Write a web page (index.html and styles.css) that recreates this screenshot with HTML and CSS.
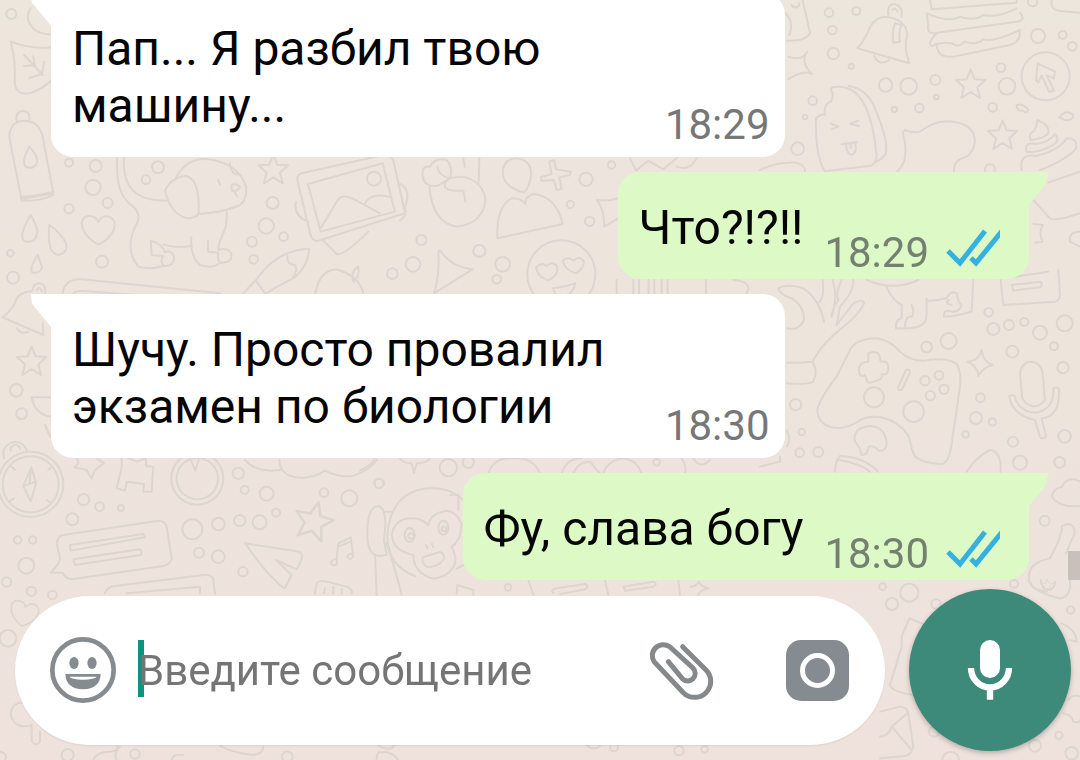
FILE: index.html
```html
<!DOCTYPE html>
<html lang="ru">

<head>
    <title>Чат</title>
    <meta charset="UTF-8">
    <meta name="viewport" content="width=device-width, initial-scale=1">
    <link rel="stylesheet" href="styles.css">
</head>

<body>
    <!-- Wallpaper -->
    <svg class="wallpaper" viewBox="0 0 1080 760" preserveAspectRatio="xMidYMin slice" aria-hidden="true">
        <defs>
            <path id="star" d="M0-44L12-14L44-12L20 10L28 42L0 24L-28 42L-20 10L-44-12L-12-14Z" />
            <path id="heart" d="M0 44C-60 10-62-42-26-42Q-6-42 0-24Q10-46 32-40C64-28 50 20 0 44Z" />
        </defs>

        <!-- top left -->
        <g transform="scale(.3333)">
            <circle cx="34" cy="42" r="15" />
            <path d="M92 25Q70 60 105 90Q125 103 155 103" />
            <path d="M32 125Q90 148 155 142M32 125Q48 180 44 250Q50 290 95 278Q135 262 155 240M72 165L128 225M100 168L104 196M72 198L104 196M132 185L126 222M88 234L126 222" />
            <path d="M50 362Q45 335 70 332Q92 335 88 360M64 598L28 410Q30 362 75 362Q118 365 128 410L160 580ZM64 602Q120 606 160 585L158 576Q100 590 62 590" />
            <path d="M88 440Q60 490 80 502Q105 508 112 485Q112 465 88 440Z" />
            <circle cx="207" cy="488" r="12" /><circle cx="287" cy="498" r="18" /><circle cx="279" cy="562" r="23" />
            <circle cx="323" cy="609" r="15" /><circle cx="207" cy="626" r="14" /><circle cx="306" cy="785" r="18" />
            <circle cx="474" cy="502" r="18" /><circle cx="438" cy="539" r="13" />
            <path d="M92 645Q50 715 78 725Q108 730 112 695Q108 670 92 645ZM148 675Q140 760 175 765Q205 758 198 730Q185 700 148 675ZM113 765Q85 810 98 818Q125 820 126 800Z" />
            <circle cx="31" cy="760" r="10" /><circle cx="39" cy="833" r="18" />
            <use href="#heart" x="295" y="690" />
            <path d="M352 470Q345 570 385 608Q425 635 413 665C380 725 390 770 415 800Q450 810 490 798Q525 800 522 770Q515 748 495 757Q485 730 452 722L455 765L490 768Q478 785 492 798M490 734Q530 745 574 738M574 712Q570 770 600 795Q640 808 660 788Q698 790 694 762Q685 740 655 750C655 710 685 700 680 635M624 722L624 755L655 758Q650 775 660 788M372 470Q360 605 500 602" />
            <path d="M524 540Q560 470 625 478Q715 490 738 560Q742 600 720 615Q670 638 596 642Q600 540 560 528Q515 530 495 572Q510 640 560 655Q590 655 596 640" />
            <path d="M655 540L660 555M695 555Q710 548 720 562Q710 578 695 572ZM705 578L712 590M690 490Q690 520 712 524" />
            <use href="#star" x="820" y="508" />
            <circle cx="818" cy="609" r="18" /><circle cx="799" cy="678" r="23" /><circle cx="851" cy="710" r="13" />
            <circle cx="756" cy="725" r="15" /><circle cx="761" cy="778" r="13" /><circle cx="1177" cy="821" r="16" />
            <path d="M892 540Q890 525 905 520L1150 465Q1170 465 1180 480L1215 640L950 724Q935 720 932 705ZM924 552L1148 490L1185 635L962 695ZM962 685L1015 598Q1030 580 1070 602L1140 640M1095 610Q1115 575 1175 592M888 605Q880 650 925 665M970 722L1010 762Q1030 770 1105 695" />
            <circle cx="1122" cy="536" r="21" />
            <path d="M730 880L770 838Q830 750 928 746Q920 820 860 845Q830 860 800 880M862 768Q860 795 885 795Q895 812 880 830M770 845L795 880M946 880Q960 810 1010 808Q1080 830 1090 880M1060 845Q1050 815 1075 800Q1080 825 1062 845" />
            <path d="M188 880Q195 835 245 838L660 880M220 880Q230 870 260 874L400 884" />
        </g>

        <!-- middle top -->
        <g transform="translate(400 0) scale(.3333)">
            <path d="M0 552Q35 570 15 620Q22 650 0 662M70 540Q60 495 90 500Q105 470 140 480Q160 500 150 535Q125 550 112 558Q70 560 70 530M112 500Q118 530 150 535M88 560Q98 670 170 680Q250 670 256 600Q250 545 190 530Q130 530 135 560Q140 575 190 572L196 605M238 475L236 550M190 475L194 500" />
            <path d="M308 520Q310 475 350 475Q395 480 393 525Q390 560 372 578Q310 560 308 520ZM292 715Q288 620 335 595Q365 595 376 612Q375 590 400 582Q470 590 488 672Z" />
            <path d="M462 480L468 508L512 515L510 525L478 532L485 568L470 570L462 540L425 542L422 532L455 522L448 485Z" />
            <circle cx="635" cy="495" r="11" /><circle cx="558" cy="538" r="20" /><circle cx="511" cy="613" r="11" />
            <circle cx="569" cy="664" r="14" /><circle cx="64" cy="720" r="15" /><circle cx="238" cy="753" r="18" />
            <circle cx="39" cy="793" r="22" /><circle cx="308" cy="793" r="22" /><circle cx="290" cy="838" r="13" />
            <path d="M120 750Q150 800 218 808L102 880Q120 820 115 755ZM590 600Q620 605 655 595M590 600Q615 630 612 680L655 655" />
            <circle cx="484" cy="823" r="102" />
            <path d="M408 802Q425 785 440 798Q460 780 472 800Q475 830 445 840Q415 835 408 802ZM488 782Q505 768 520 782Q540 765 552 785Q550 808 528 820Q495 812 488 782ZM458 865Q500 860 526 850Q520 880 500 885M458 865L468 885" />
            <path d="M690 475L708 512L745 482L790 508L830 475M830 500Q870 515 890 475M650 840L650 880M700 840L700 880M717 840V880M746 840V880M763 840V880M785 840V880M803 840V880M918 840V880M1000 840Q1060 845 1040 880" />
        </g>

        <!-- top right -->
        <g transform="translate(760 0) scale(.3333)">
            <path d="M128 0L150 98Q140 125 80 122M70 35Q105 60 88 105M95 15A12 12 0 0 0 118 10" />
            <path d="M142 155Q120 185 155 222Q130 208 85 238M142 155Q125 185 85 170" />
            <circle cx="207" cy="38" r="13" /><circle cx="289" cy="33" r="12" /><circle cx="217" cy="90" r="13" />
            <circle cx="220" cy="161" r="17" /><circle cx="274" cy="199" r="8" /><circle cx="158" cy="302" r="13" />
            <circle cx="113" cy="446" r="19" /><circle cx="135" cy="351" r="7" />
            <path d="M292 145C330 110 320 60 372 50Q440 55 442 105Q430 140 448 190ZM342 168Q355 200 388 180M385 45Q380 12 405 12Q430 20 425 50M398 30Q406 20 412 34M405 70Q395 95 400 128L420 125Q415 95 425 75Z" />
            <path d="M510 0L515 28Q560 25 640 18L770 8V0M500 40Q570 70 600 50Q640 65 670 45Q710 55 770 25M505 75Q500 100 520 100L770 65Q800 60 780 38M505 75L500 40M530 100Q500 130 515 138Q550 125 575 130Q595 145 615 125Q650 138 670 118Q700 128 780 90M530 130Q530 175 580 170L750 135Q785 125 778 90" />
            <circle cx="818" cy="5" r="14" /><circle cx="834" cy="108" r="21" /><circle cx="908" cy="105" r="12" /><circle cx="937" cy="139" r="13" />
            <path d="M875 0Q870 30 900 33L960 38" />
            <circle cx="857" cy="229" r="72" />
            <path d="M833 190L885 215L882 235L860 226L882 272L868 276L845 226L835 248L828 240Z" />
            <circle cx="377" cy="255" r="20" /><circle cx="446" cy="259" r="25" /><circle cx="526" cy="240" r="15" />
            <circle cx="529" cy="291" r="7" /><circle cx="478" cy="324" r="13" /><circle cx="403" cy="328" r="8" />
            <circle cx="723" cy="203" r="13" /><circle cx="741" cy="259" r="25" /><circle cx="698" cy="322" r="13" />
            <use href="#star" x="632" y="252" /><use href="#star" x="728" y="405" />
            <path d="M770 315Q790 308 805 330Q800 342 788 332Q770 335 770 315ZM898 352Q920 325 940 345Q940 362 915 360Z" />
            <path d="M218 262Q330 240 350 470Q345 500 325 498L195 514Q165 470 168 355Q185 340 195 345Q190 310 212 305Q225 285 212 268ZM265 258Q320 265 345 325Q385 420 378 460Q370 475 350 485M212 370L235 380L215 388M295 362L270 372L298 378M245 432L290 427M258 432Q260 465 278 464Q292 455 286 428M272 430L272 445" />
            <path d="M412 514Q435 490 435 470Q440 440 428 398L435 390Q460 400 480 395Q520 365 560 364Q620 365 640 400Q655 440 620 470Q580 480 582 514" />
            <path d="M812 420Q805 400 820 395Q830 385 832 360Q870 375 865 400Q855 415 812 420ZM800 455Q790 425 830 432Q870 425 885 402Q905 425 870 440Q830 460 800 455ZM785 510Q775 460 830 468Q900 450 920 415Q955 415 948 445Q920 480 840 510" />
            <circle cx="690" cy="508" r="15" />
            <path d="M0 510Q50 485 110 488Q135 495 135 514M865 548Q900 535 960 515M820 600L870 655Q890 665 960 640M820 672L848 675Q835 700 848 725L825 728M960 695Q925 695 930 725L960 740" />
        </g>

        <!-- left, middle -->
        <g transform="translate(0 280) scale(.3333)">
            <path d="M8 112Q45 80 50 55Q65 35 95 34M8 112L130 165L128 130M50 145Q65 165 85 155M98 30Q100 8 120 10Q140 15 135 40M110 30Q118 18 126 34" />
            <use href="#star" x="95" y="243" />
            <circle cx="49" cy="331" r="19" /><circle cx="65" cy="401" r="16" />
            <path d="M155 352L95 352Q105 405 155 410M135 435L150 470" />
            <circle cx="92" cy="613" r="98" /><circle cx="92" cy="613" r="84" />
            <path d="M12 535A34 34 0 1 1 80 510M32 512A14 14 0 1 1 60 506M94 562L108 610L92 665L70 618ZM70 618L108 605M94 562L88 612M35 560L45 570M28 665L42 655M145 570L155 560M140 660L152 668" />
            <path d="M228 535Q245 550 222 562L260 570L275 596L285 570L312 550L290 536M365 535V562L350 625L375 632L380 605L432 612L430 635L455 635L460 560L438 558V535L412 545L385 535" />
            <circle cx="592" cy="596" r="78" /><circle cx="592" cy="596" r="62" />
            <path d="M572 538L586 572L596 538" />
            <circle cx="251" cy="659" r="17" /><circle cx="299" cy="680" r="13" /><circle cx="363" cy="684" r="9" /><circle cx="217" cy="718" r="18" />
            <circle cx="715" cy="580" r="17" /><circle cx="734" cy="630" r="12" /><circle cx="800" cy="641" r="21" /><circle cx="828" cy="698" r="12" />
            <circle cx="577" cy="748" r="30" /><circle cx="655" cy="732" r="19" /><circle cx="719" cy="722" r="17" /><circle cx="779" cy="727" r="21" />
            <circle cx="597" cy="818" r="15" /><circle cx="655" cy="830" r="19" /><circle cx="729" cy="875" r="14" />
            <circle cx="972" cy="638" r="13" /><circle cx="1048" cy="655" r="24" /><circle cx="1137" cy="610" r="14" />
            <circle cx="53" cy="780" r="11" /><circle cx="98" cy="780" r="11" /><circle cx="79" cy="857" r="24" /><circle cx="20" cy="906" r="14" />
            <circle cx="94" cy="934" r="14" /><circle cx="157" cy="945" r="13" />
            <path d="M735 540Q770 580 840 570M838 540Q840 590 900 593Q940 595 975 572Q1020 595 1060 587Q1110 570 1130 540" />
            <use href="#star" transform="translate(942 722) rotate(14) scale(1.3)" />
            <path d="M190 765L475 722Q495 722 500 740L515 835Q510 855 490 858L215 898Q195 895 188 878L152 878Q180 850 180 835L170 790Q175 765 190 765ZM210 795L430 762L435 772L212 812ZM220 838L420 808Q430 815 422 825L225 855Z" />
            <path d="M735 790L900 815Q915 830 890 868L828 840L875 885L855 925Q845 920 840 915Q790 870 735 790ZM1010 835L1015 790L1052 772L1060 830Q1050 845 1042 830Q1045 820 1058 822M1015 800L1052 785M1010 835Q1015 860 998 855Q985 845 1010 835Z" />
            <path d="M315 940Q320 920 345 918L610 885Q635 882 640 900L645 940M380 940L600 920V940M945 940L950 910Q960 900 980 905L1040 920Q1060 930 1055 940M975 925L972 940M1000 920V940M1025 928V940" />
        </g>

        <!-- monkey and what stands round it -->
        <g transform="translate(360 440) scale(.3333)">
            <circle cx="58" cy="130" r="14" /><circle cx="265" cy="83" r="26" /><circle cx="325" cy="67" r="17" />
            <path d="M0 92Q35 75 45 55M120 55Q130 70 155 70L162 98L170 70Q200 70 210 55M385 100Q400 50 460 55Q520 50 540 100M605 100Q620 55 665 55M640 100Q655 65 690 65L720 100M730 100Q745 60 790 55Q830 60 845 100M965 55Q980 75 975 100M1000 55Q1020 90 1050 60" />
            <circle cx="890" cy="67" r="10" />
            <path d="M310 180Q270 140 205 145Q90 155 82 290Q85 380 165 408M160 345Q90 330 97 275Q110 230 165 235Q190 240 205 255Q210 220 260 212Q290 215 304 250Q305 300 275 320Q290 350 285 370Q270 410 220 416Q160 400 160 345M188 352Q210 345 240 336Q258 345 250 360Q230 385 200 380Q185 370 188 352ZM198 315L202 325M216 312L220 322" />
            <ellipse cx="149" cy="285" rx="15" ry="21" /><ellipse cx="250" cy="263" rx="15" ry="21" />
            <circle cx="153" cy="288" r="8" /><circle cx="252" cy="267" r="7" />
            <path d="M75 345Q25 360 22 290Q20 200 55 198Q80 205 75 270L72 300L80 345M45 345L50 465M80 310Q110 400 125 465M75 215L95 215M270 165L295 165V210M290 385L310 375" />
            <circle cx="444" cy="442" r="10" />
            <path d="M290 460L292 435L340 450V465M505 420L520 465M580 460Q570 450 590 445L675 432Q690 440 675 448L600 462M735 420L745 465M790 440L880 425Q895 432 880 440L795 452ZM955 420L960 465M990 440Q1010 440 1015 425Q1025 440 1045 445Q1020 450 1015 465" />
            <path d="M55 915Q70 930 95 925Q110 915 105 905M50 960Q50 930 65 938Q90 930 115 960M680 915Q700 935 720 918" />
            <circle cx="762" cy="922" r="12" /><circle cx="957" cy="932" r="14" /><circle cx="1034" cy="928" r="10" />
        </g>

        <!-- gamepad, microphone -->
        <g transform="translate(760 270) scale(.3333)">
            <path d="M55 55Q80 40 130 55Q180 90 192 155M55 55Q60 75 95 85Q135 110 132 150Q115 185 80 175M188 30Q195 90 172 100M218 30Q235 80 215 140M245 30Q225 70 235 90Q215 120 215 140M280 30Q285 60 240 110L230 165M230 165L280 100Q310 85 312 100Q300 130 245 175Q190 215 157 275M80 278Q90 280 157 275Q175 300 160 335Q150 345 80 340" />
            <path d="M320 30Q400 65 475 30M380 50Q395 90 425 105V145Q405 150 408 175Q440 178 475 170Q500 165 500 130V85Q490 100 560 85Q570 60 590 70Q595 100 605 105Q600 125 575 125Q550 115 552 140Q580 140 635 125L640 30M455 105Q465 130 455 140Q435 135 435 175M568 90Q550 100 575 105" />
            <path d="M722 30L730 105L885 95Q900 90 900 75L895 0M755 45L842 35Q850 45 840 52L760 62ZM765 20L865 5" />
            <path d="M270 240Q290 205 350 205Q390 210 420 245Q450 272 490 272Q570 260 592 285Q605 310 600 350L578 500Q570 580 545 582Q490 580 465 560Q455 540 450 510Q440 475 390 450Q340 430 300 450Q260 480 215 472Q170 460 172 415Q190 370 230 320Z" />
            <path d="M325 250Q350 240 358 255L362 275Q385 270 385 295Q385 318 365 312Q368 330 350 332Q330 342 322 335L315 315Q295 325 297 295Q300 275 325 275ZM438 300Q450 295 450 308L425 360Q412 362 415 350Z" />
            <circle cx="342" cy="382" r="30" /><circle cx="461" cy="425" r="31" />
            <circle cx="495" cy="332" r="14" /><circle cx="537" cy="316" r="13" /><circle cx="552" cy="358" r="14" /><circle cx="511" cy="377" r="14" />
            <circle cx="500" cy="231" r="16" /><circle cx="566" cy="213" r="24" />
            <circle cx="686" cy="127" r="13" /><circle cx="700" cy="177" r="18" /><circle cx="747" cy="165" r="15" /><circle cx="793" cy="156" r="12" />
            <circle cx="840" cy="188" r="21" /><circle cx="914" cy="160" r="24" /><circle cx="882" cy="229" r="12" /><circle cx="757" cy="245" r="18" />
            <circle cx="909" cy="293" r="17" /><circle cx="661" cy="383" r="13" /><circle cx="648" cy="444" r="18" /><circle cx="697" cy="456" r="11" />
            <circle cx="617" cy="493" r="10" /><circle cx="759" cy="515" r="15" /><circle cx="914" cy="499" r="19" /><circle cx="780" cy="578" r="21" />
            <circle cx="899" cy="577" r="16" /><circle cx="107" cy="404" r="17" /><circle cx="125" cy="486" r="10" /><circle cx="119" cy="548" r="13" /><circle cx="175" cy="546" r="15" />
            <path d="M665 240Q668 275 698 285Q670 290 655 318Q655 290 622 275Q655 275 665 240Z" />
            <path d="M780 310Q785 275 815 275Q845 280 848 310L855 390Q840 412 815 408Q790 400 786 380ZM748 378Q765 370 768 390Q780 425 830 428Q885 415 880 355Q895 348 897 360Q900 440 845 445L858 500Q845 510 840 500L825 450Q755 435 748 378Z" />
            <path d="M285 515Q275 475 330 468Q375 470 380 520Q380 545 355 542Q345 525 325 530Q325 555 305 555Q300 530 285 515ZM225 605Q225 575 240 558Q310 560 355 605M238 570Q300 580 330 605M620 605Q650 560 690 540Q725 545 722 605M80 480Q95 510 80 530M0 590L60 575V560" />
            <path d="M875 680Q885 650 905 652Q915 625 945 628L960 635M875 680Q900 715 960 708" />
            <circle cx="854" cy="752" r="15" />
            <path d="M870 865Q910 790 905 770Q925 755 940 770Q950 790 935 810L918 850M870 865Q800 880 808 930Q815 960 860 965M930 870Q940 900 930 940" />
            <use href="#star" transform="translate(862 945) scale(.4)" />
        </g>

        <!-- below and beside the message box -->
        <g transform="translate(0 580) scale(.3333)">
            <use href="#heart" transform="translate(72 102) rotate(12) scale(.85)" />
            <circle cx="24" cy="175" r="25" />
            <path d="M95 435Q45 450 32 405Q35 360 80 370M95 440V485Q110 500 120 485V455M0 515Q25 520 15 540M280 540Q290 515 330 515Q360 510 350 498M350 540Q340 520 360 500M660 498Q700 520 760 525Q790 520 790 500M515 540Q520 520 550 525" />
            <circle cx="203" cy="525" r="18" /><circle cx="405" cy="522" r="14" /><circle cx="862" cy="530" r="16" />
        </g>
        <g transform="translate(880 580) scale(.3333)">
            <circle cx="88" cy="38" r="27" /><circle cx="36" cy="72" r="18" /><circle cx="8" cy="20" r="10" /><circle cx="168" cy="72" r="14" /><circle cx="402" cy="12" r="12" />
            <path d="M445 0Q455 35 540 55Q575 50 570 0M482 0Q485 28 505 30Q525 28 525 5" />
            <circle cx="572" cy="90" r="11" /><circle cx="537" cy="466" r="11" /><circle cx="575" cy="520" r="19" />
            <path d="M88 115L150 140M88 115L65 170V200L30 315Q35 335 100 345M0 395L60 380Q80 380 85 400L100 500Q95 525 75 528L0 535M0 470Q25 470 35 440L82 400M35 440L95 510M545 130Q590 150 590 185L570 180M565 360Q580 340 600 350M550 400Q575 405 580 425Q600 430 600 420" />
            <circle cx="465" cy="497" r="18" /><circle cx="212" cy="540" r="25" /><circle cx="162" cy="455" r="15" />
        </g>
    </svg>

    <div class="chat">
        <main class="messages">
            <div class="bubble in">
                <p class="text">Пап... Я разбил твою машину...</p>
                <time class="time">18:29</time>
            </div>
            <div class="bubble out">
                <p class="text">Что?!?!!</p>
                <time class="time">18:29</time>
                <svg class="ticks" viewBox="0 0 54 38" role="img" aria-label="Прочитано">
                    <path d="M2 22L14 34L39 2M25 29L30 34L56 2" />
                </svg>
            </div>
            <div class="bubble in">
                <p class="text">Шучу. Просто провалил экзамен по биологии</p>
                <time class="time">18:30</time>
            </div>
            <div class="bubble out">
                <p class="text">Фу, слава богу</p>
                <time class="time">18:30</time>
                <svg class="ticks" viewBox="0 0 54 38" role="img" aria-label="Прочитано">
                    <path d="M2 22L14 34L39 2M25 29L30 34L56 2" />
                </svg>
            </div>
            <div class="scroll-thumb"></div>
        </main>

        <form class="composer">
            <div class="entry">
                <button class="icon-btn" type="button" aria-label="Эмодзи">
                    <svg width="66" height="66" viewBox="0 0 198 198">
                        <circle cx="99" cy="99" r="92" fill="none" stroke="#868b8f" stroke-width="14" />
                        <ellipse cx="72" cy="78" rx="14" ry="18" fill="#868b8f" />
                        <ellipse cx="126" cy="78" rx="14" ry="18" fill="#868b8f" />
                        <path d="M46 111H152Q150 156 99 157Q48 156 46 111Z" fill="#868b8f" />
                        <path d="M58 119H140Q134 127 99 128Q64 127 58 119Z" fill="#fff" />
                    </svg>
                </button>
                <div class="field">
                    <input class="message" type="text" name="message" placeholder="Введите сообщение" aria-label="Введите сообщение">
                </div>
                <button class="icon-btn" type="button" aria-label="Прикрепить">
                    <svg width="66" height="60" viewBox="88 60 198 180">
                        <path d="M192 80L262 150A48 48 0 0 1 194 218L107 126A33 33 0 0 1 153 80L223 144A22 22 0 0 1 191 176L149 125" fill="none" stroke="#85898b" stroke-width="15" stroke-linecap="round" />
                    </svg>
                </button>
                <button class="icon-btn camera" type="button" aria-label="Камера">
                    <svg width="63" height="61" viewBox="0 0 63 61">
                        <rect width="63" height="61" rx="15" fill="#868b91" />
                        <circle cx="31.5" cy="30.5" r="15" fill="none" stroke="#fff" stroke-width="5" />
                    </svg>
                </button>
            </div>
            <button class="mic" type="button" aria-label="Голосовое сообщение">
                <svg width="48" height="60" viewBox="260 178 144 180">
                    <rect x="302" y="178" width="60" height="114" rx="30" fill="#fff" />
                    <path d="M275 262A57 58 0 0 0 389 262M332 320V357" fill="none" stroke="#fff" stroke-width="19" />
                </svg>
            </button>
        </form>
    </div>
</body>

</html>
```
FILE: styles.css
```css
* {
    box-sizing: border-box;
}

body {
    margin: 0;
    background: linear-gradient(#ede6dd, #ede4dc 50%, #efe2dd);
    font-family: Roboto, "Noto Sans", sans-serif;
    color: #050505;
}

.wallpaper {
    position: fixed;
    top: 0;
    left: 0;
    width: 100%;
    height: 100%;
    z-index: -1;
    fill: none;
    stroke: #ddd6ce;
    stroke-width: 6;
    stroke-linejoin: round;
    stroke-linecap: round;
}

.chat {
    display: flex;
    flex-direction: column;
    height: 100vh;
}

/* Messages */
.messages {
    position: relative;
    display: flex;
    flex: 1;
    flex-direction: column;
    justify-content: flex-end;
    gap: 15px;
    min-height: 0;
    padding: 0 51px;
    overflow: hidden;
}

.bubble {
    position: relative;
    display: flex;
    flex-shrink: 0;
    align-items: flex-end;
    max-width: 75%;
    padding-left: 21px;
    border-radius: 22px;
}

.bubble::before {
    content: "";
    position: absolute;
    top: 0;
    width: 21px;
    height: 34px;
    background: inherit;
}

.in {
    align-self: flex-start;
    padding-right: 15px;
    background: #fff;
    border-top-left-radius: 0;
}

.in::before {
    left: -20px;
    clip-path: polygon(0 0, 100% 0, 100% 100%, 4% 28%);
}

.out {
    align-self: flex-end;
    padding-right: 29px;
    background: #dcf9c6;
    border-top-right-radius: 0;
}

.out::before {
    right: -20px;
    clip-path: polygon(0 0, 100% 0, 80% 40%, 0 100%);
}

.text {
    flex: 1;
    margin: 0;
    padding: 27px 21px 23px 0;
    font-size: 48px;
    line-height: 57px;
}

.time {
    padding-bottom: 8px;
    font-size: 42px;
    line-height: 48px;
    color: #777;
}

.out .time {
    padding-bottom: 2px;
    color: #758071;
}

.ticks {
    width: 54px;
    height: 38px;
    margin: 0 0 12px 17px;
    fill: none;
    stroke: #35b1e1;
    stroke-width: 5;
}

.scroll-thumb {
    position: absolute;
    right: 0;
    bottom: 0;
    width: 12px;
    height: 29px;
    background: #c9c0bb;
}

/* Composer */
.composer {
    display: flex;
    align-items: center;
    gap: 24px;
    padding: 9px 9px 9px 15px;
}

.entry {
    display: flex;
    flex: 1;
    align-items: center;
    min-width: 0;
    height: 149px;
    padding: 0 36px 0 35px;
    border-radius: 75px;
    background: #fff;
    box-shadow: 0 1px 2px rgba(0, 0, 0, 0.08);
}

.icon-btn {
    display: flex;
    flex-shrink: 0;
    padding: 0;
    border: 0;
    background: none;
    cursor: pointer;
}

.camera {
    margin-left: 72px;
}

.field {
    position: relative;
    flex: 1;
    min-width: 0;
    margin: 0 22px;
}

/* text cursor */
.field::before {
    content: "";
    position: absolute;
    top: 0;
    left: 0;
    width: 6px;
    height: 57px;
    background: #0c927f;
}

.message {
    display: block;
    position: relative;
    width: 100%;
    height: 60px;
    padding: 0;
    border: 0;
    outline: 0;
    background: none;
    font-family: inherit;
    font-size: 42px;
    color: #050505;
}

.message::placeholder {
    color: #757575;
    opacity: 1;
}

.mic {
    display: flex;
    flex-shrink: 0;
    align-items: center;
    justify-content: center;
    width: 162px;
    height: 162px;
    padding: 0;
    border: 0;
    border-radius: 50%;
    background: #3d8a7b;
    box-shadow: 0 2px 5px rgba(0, 0, 0, 0.25);
    cursor: pointer;
}
```
